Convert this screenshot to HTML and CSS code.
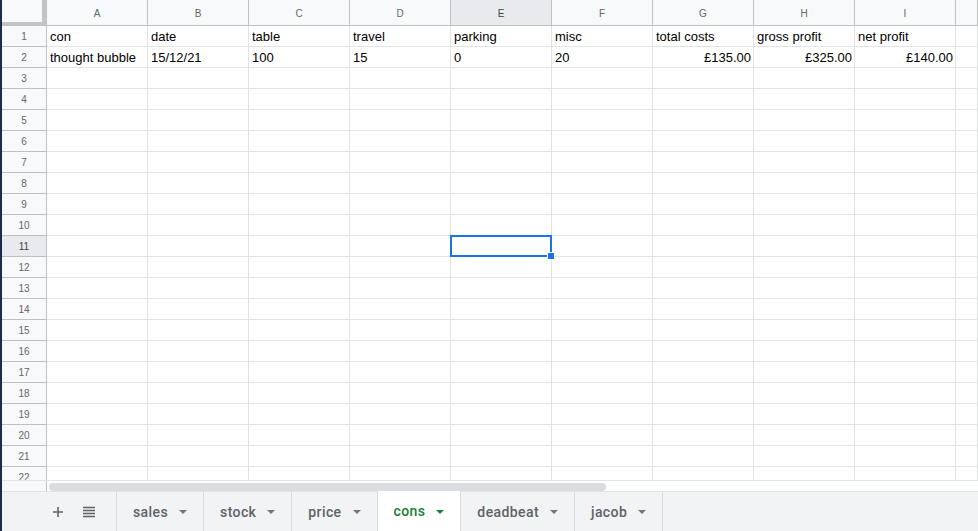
FILE: index.html
```html
<!DOCTYPE html>
<html>
<head>
<meta charset="utf-8">
<link rel="stylesheet" href="styles.css">
</head>
<body>
<div class="strip"></div>
<div class="app">
  <div class="sheet">
    <div class="grid">
      <div class="corner"></div>
      <div class="ch">A</div><div class="ch">B</div><div class="ch">C</div><div class="ch">D</div><div class="ch sel">E</div><div class="ch">F</div><div class="ch">G</div><div class="ch">H</div><div class="ch">I</div><div class="ch"></div>

      <div class="rh">1</div>
      <div class="c">con</div><div class="c">date</div><div class="c">table</div><div class="c">travel</div><div class="c">parking</div><div class="c">misc</div><div class="c">total costs</div><div class="c">gross profit</div><div class="c">net profit</div><div class="c"></div>

      <div class="rh">2</div>
      <div class="c">thought bubble</div><div class="c">15/12/21</div><div class="c">100</div><div class="c">15</div><div class="c">0</div><div class="c">20</div><div class="c r">£135.00</div><div class="c r">£325.00</div><div class="c r">£140.00</div><div class="c"></div>

      <div class="rh">3</div><div class="c"></div><div class="c"></div><div class="c"></div><div class="c"></div><div class="c"></div><div class="c"></div><div class="c"></div><div class="c"></div><div class="c"></div><div class="c"></div>
      <div class="rh">4</div><div class="c"></div><div class="c"></div><div class="c"></div><div class="c"></div><div class="c"></div><div class="c"></div><div class="c"></div><div class="c"></div><div class="c"></div><div class="c"></div>
      <div class="rh">5</div><div class="c"></div><div class="c"></div><div class="c"></div><div class="c"></div><div class="c"></div><div class="c"></div><div class="c"></div><div class="c"></div><div class="c"></div><div class="c"></div>
      <div class="rh">6</div><div class="c"></div><div class="c"></div><div class="c"></div><div class="c"></div><div class="c"></div><div class="c"></div><div class="c"></div><div class="c"></div><div class="c"></div><div class="c"></div>
      <div class="rh">7</div><div class="c"></div><div class="c"></div><div class="c"></div><div class="c"></div><div class="c"></div><div class="c"></div><div class="c"></div><div class="c"></div><div class="c"></div><div class="c"></div>
      <div class="rh">8</div><div class="c"></div><div class="c"></div><div class="c"></div><div class="c"></div><div class="c"></div><div class="c"></div><div class="c"></div><div class="c"></div><div class="c"></div><div class="c"></div>
      <div class="rh">9</div><div class="c"></div><div class="c"></div><div class="c"></div><div class="c"></div><div class="c"></div><div class="c"></div><div class="c"></div><div class="c"></div><div class="c"></div><div class="c"></div>
      <div class="rh">10</div><div class="c"></div><div class="c"></div><div class="c"></div><div class="c"></div><div class="c"></div><div class="c"></div><div class="c"></div><div class="c"></div><div class="c"></div><div class="c"></div>
      <div class="rh sel">11</div><div class="c"></div><div class="c"></div><div class="c"></div><div class="c"></div><div class="c active"><span class="handle"></span></div><div class="c"></div><div class="c"></div><div class="c"></div><div class="c"></div><div class="c"></div>
      <div class="rh">12</div><div class="c"></div><div class="c"></div><div class="c"></div><div class="c"></div><div class="c"></div><div class="c"></div><div class="c"></div><div class="c"></div><div class="c"></div><div class="c"></div>
      <div class="rh">13</div><div class="c"></div><div class="c"></div><div class="c"></div><div class="c"></div><div class="c"></div><div class="c"></div><div class="c"></div><div class="c"></div><div class="c"></div><div class="c"></div>
      <div class="rh">14</div><div class="c"></div><div class="c"></div><div class="c"></div><div class="c"></div><div class="c"></div><div class="c"></div><div class="c"></div><div class="c"></div><div class="c"></div><div class="c"></div>
      <div class="rh">15</div><div class="c"></div><div class="c"></div><div class="c"></div><div class="c"></div><div class="c"></div><div class="c"></div><div class="c"></div><div class="c"></div><div class="c"></div><div class="c"></div>
      <div class="rh">16</div><div class="c"></div><div class="c"></div><div class="c"></div><div class="c"></div><div class="c"></div><div class="c"></div><div class="c"></div><div class="c"></div><div class="c"></div><div class="c"></div>
      <div class="rh">17</div><div class="c"></div><div class="c"></div><div class="c"></div><div class="c"></div><div class="c"></div><div class="c"></div><div class="c"></div><div class="c"></div><div class="c"></div><div class="c"></div>
      <div class="rh">18</div><div class="c"></div><div class="c"></div><div class="c"></div><div class="c"></div><div class="c"></div><div class="c"></div><div class="c"></div><div class="c"></div><div class="c"></div><div class="c"></div>
      <div class="rh">19</div><div class="c"></div><div class="c"></div><div class="c"></div><div class="c"></div><div class="c"></div><div class="c"></div><div class="c"></div><div class="c"></div><div class="c"></div><div class="c"></div>
      <div class="rh">20</div><div class="c"></div><div class="c"></div><div class="c"></div><div class="c"></div><div class="c"></div><div class="c"></div><div class="c"></div><div class="c"></div><div class="c"></div><div class="c"></div>
      <div class="rh">21</div><div class="c"></div><div class="c"></div><div class="c"></div><div class="c"></div><div class="c"></div><div class="c"></div><div class="c"></div><div class="c"></div><div class="c"></div><div class="c"></div>
      <div class="rh">22</div><div class="c"></div><div class="c"></div><div class="c"></div><div class="c"></div><div class="c"></div><div class="c"></div><div class="c"></div><div class="c"></div><div class="c"></div><div class="c"></div>
    </div>
  </div>
  <div class="hscroll">
    <div class="hs-corner"></div>
    <div class="hs-track"><div class="thumb"></div></div>
  </div>
  <div class="tabbar">
    <div class="tools">
      <svg class="plus" width="12" height="12" viewBox="0 0 12 12"><path d="M6 1v10M1 6h10" stroke="#5f6368" stroke-width="1.6"/></svg>
      <svg class="list" width="14" height="12" viewBox="0 0 14 12"><path d="M1 1.5h12M1 4.5h12M1 7.5h12M1 10.5h12" stroke="#5f6368" stroke-width="1.5"/></svg>
    </div>
    <div class="tab">sales<span class="caret"></span></div>
    <div class="tab">stock<span class="caret"></span></div>
    <div class="tab">price<span class="caret"></span></div>
    <div class="tab on">cons<span class="caret"></span></div>
    <div class="tab">deadbeat<span class="caret"></span></div>
    <div class="tab">jacob<span class="caret"></span></div>
  </div>
</div>
</body>
</html>
```

FILE: styles.css
```css
* { box-sizing: border-box; }
html, body { margin: 0; padding: 0; }
body {
  width: 978px;
  height: 531px;
  overflow: hidden;
  display: flex;
  background: #fff;
  font-family: "Liberation Sans", Arial, sans-serif;
}
.strip {
  width: 2px;
  flex: none;
  background: #1c2c4c;
}
.app {
  flex: 1;
  display: flex;
  flex-direction: column;
  min-width: 0;
}
.sheet {
  height: 480px;
  overflow: hidden;
  flex: none;
}
.grid {
  display: grid;
  grid-template-columns: 45px repeat(9, 101px) 22px;
  grid-template-rows: 26px repeat(22, 21px);
}
.corner {
  background: #f8f9fa;
  border-right: 1px solid #c0c0c0;
  border-bottom: 1px solid #c0c0c0;
  box-shadow: inset -4px -3px 0 #c4c4c4;
}
.ch {
  background: #f8f9fa;
  border-right: 1px solid #c0c0c0;
  border-bottom: 1px solid #c0c0c0;
  color: #666;
  font-size: 10px;
  display: flex;
  align-items: center;
  justify-content: center;
  padding-top: 1px;
}
.ch.sel { background: #e8eaed; color: #444; }
.rh {
  background: #f8f9fa;
  border-right: 1px solid #c0c0c0;
  border-bottom: 1px solid #c0c0c0;
  color: #666;
  font-size: 10px;
  display: flex;
  align-items: center;
  justify-content: center;
}
.rh.sel { background: #e8eaed; color: #444; }
.c {
  border-right: 1px solid #e2e3e3;
  border-bottom: 1px solid #e2e3e3;
  font-size: 13px;
  color: #000;
  padding: 0 3px;
  display: flex;
  align-items: center;
  white-space: nowrap;
  overflow: visible;
  position: relative;
}
.c.r { justify-content: flex-end; padding-right: 2px; }
.c.active::before {
  content: "";
  position: absolute;
  left: -1px;
  top: -1px;
  right: -1px;
  bottom: -1px;
  border: 2px solid #1a73e8;
}
.handle {
  position: absolute;
  right: -4px;
  bottom: -4px;
  width: 6px;
  height: 6px;
  background: #1a73e8;
  border: 1px solid #fff;
  box-sizing: content-box;
  z-index: 2;
}
.hscroll {
  height: 11px;
  flex: none;
  display: flex;
  border-top: 1px solid #e2e3e3;
}
.hs-corner {
  width: 45px;
  background: #f8f9fa;
  border-right: 1px solid #c0c0c0;
}
.hs-track {
  flex: 1;
  padding: 2px 0 0 2px;
}
.thumb {
  width: 557px;
  height: 8px;
  border-radius: 4px;
  background: #dadce0;
}
.tabbar {
  flex: 1;
  background: #f1f3f4;
  border-top: 1px solid #e2e3e3;
  display: flex;
  align-items: stretch;
  font-family: Roboto, "Noto Sans", sans-serif;
  font-size: 14px;
  font-weight: 500;
  color: #5f6368;
}
.tools {
  width: 115px;
  display: flex;
  align-items: center;
  padding-left: 50px;
  gap: 18px;
  border-right: 1px solid #dadce0;
}
.tab {
  display: flex;
  align-items: center;
  padding: 0 16px;
  gap: 11px;
  border-right: 1px solid #dadce0;
  letter-spacing: 0.4px;
}
.tab.on {
  background: #fff;
  color: #188038;
  margin-top: -1px;
}
.caret {
  width: 0;
  height: 0;
  border-left: 4px solid transparent;
  border-right: 4px solid transparent;
  border-top: 4px solid #757575;
  margin-top: 1px;
}
.tab.on .caret { border-top-color: #188038; }
```
